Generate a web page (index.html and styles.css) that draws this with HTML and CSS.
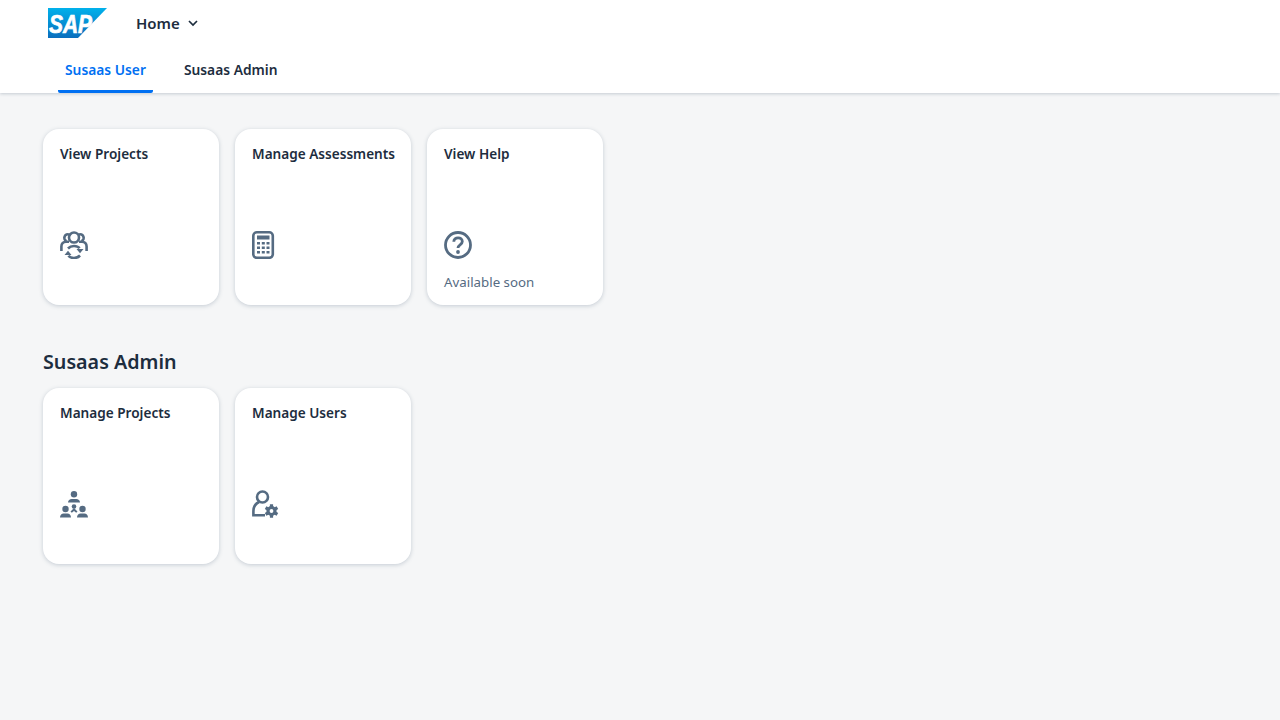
FILE: index.html
```html
<!DOCTYPE html>
<html lang="en">
<head>
    <meta charset="UTF-8">
    <title>Home</title>
    <link rel="stylesheet" href="styles.css">
</head>
<body>

<header class="shell">
    <div class="shell-top">
        <svg class="logo" width="59" height="30" viewBox="0 0 59 30">
            <defs>
                <linearGradient id="sapBlue" x1="0" y1="0" x2="0" y2="1">
                    <stop offset="0" stop-color="#00b1eb"/>
                    <stop offset="1" stop-color="#0a6ebd"/>
                </linearGradient>
            </defs>
            <polygon points="0,0 59,0 30,30 0,30" fill="url(#sapBlue)"/>
            <text class="logo-text" x="1" y="25" textLength="43" lengthAdjust="spacingAndGlyphs">SAP</text>
        </svg>
        <div class="home-menu">
            <span>Home</span>
            <svg width="12" height="12" viewBox="0 0 12 12"><path d="M2 4l4 4 4-4" fill="none" stroke="#1d2d3e" stroke-width="1.7"/></svg>
        </div>
    </div>
    <nav class="tabs">
        <a class="tab active">Susaas User</a>
        <a class="tab">Susaas Admin</a>
    </nav>
</header>

<main class="content">
    <section class="tile-row">
        <div class="tile">
            <div class="tile-title">View Projects</div>
            <div class="tile-body">
                <svg class="icon icon-heavy" width="28" height="28" viewBox="0 0 28 28">
                    <circle cx="14" cy="6.500" r="5"/>
                    <path d="M9.300 3.600a3.500 3.500 0 1 0-2.800 6.600M18.700 3.600a3.500 3.500 0 1 1 2.800 6.600"/>
                    <path d="M1.400 20v-4.500c0-3 2-4.800 4.600-4.800h3M26.600 20v-4.500c0-3-2-4.800-4.600-4.800h-3"/>
                    <path d="M8 17.500c1.600-1.700 3.600-2.500 6-2.500s4.400.8 5.600 2.300M20 24.500c-1.600 1.700-3.600 2.500-6 2.500s-4.400-.8-5.600-2.300"/>
                    <path class="solid" d="M16.500 18h7l-3.500 4.300zM4.500 24h7l-3.500-4.300z"/>
                </svg>
            </div>
        </div>
        <div class="tile">
            <div class="tile-title">Manage Assessments</div>
            <div class="tile-body">
                <svg class="icon" width="28" height="28" viewBox="0 0 28 28">
                    <rect x="1.300" y="1.300" width="19.500" height="25.500" rx="3.500" stroke-width="2.600"/>
                    <rect class="solid" x="5" y="4.500" width="12.500" height="4"/>
                    <path class="solid" d="M5 11h3v2.500h-3zM9.800 11h3v2.500h-3zM14.500 11h3v2.500h-3zM5 15.500h3v2.500h-3zM9.800 15.500h3v2.500h-3zM14.500 15.500h3v2.500h-3zM5 20h3v2.500h-3zM9.800 20h3v2.500h-3zM14.500 20h3v2.500h-3z"/>
                </svg>
            </div>
        </div>
        <div class="tile">
            <div class="tile-title">View Help</div>
            <div class="tile-body">
                <svg class="icon" width="28" height="28" viewBox="0 0 28 28">
                    <circle cx="14" cy="14" r="12.500" stroke-width="2.800"/>
                    <path d="M9.800 10.800c0-2.500 1.900-4 4.300-4s4.200 1.600 4.200 3.800c0 3.300-4.300 3.300-4.300 6.400" stroke-width="2.800"/>
                    <circle class="solid" cx="14" cy="21" r="1.900"/>
                </svg>
                <div class="tile-note">Available soon</div>
            </div>
        </div>
    </section>

    <h2 class="section-title">Susaas Admin</h2>

    <section class="tile-row">
        <div class="tile">
            <div class="tile-title">Manage Projects</div>
            <div class="tile-body">
                <svg class="icon" width="28" height="28" viewBox="0 0 28 28">
                    <g class="solid">
                        <circle cx="14" cy="4.300" r="3.200"/>
                        <path d="M8 12.500c0-2 1.800-3.500 3.700-3.500h4.600c1.900 0 3.700 1.500 3.700 3.500z"/>
                        <circle cx="5.500" cy="19" r="3.200"/>
                        <path d="M0 27.500c0-2.400 1.800-4 3.500-4h4c1.700 0 3.500 1.600 3.500 4z"/>
                        <circle cx="22.500" cy="19" r="3.200"/>
                        <path d="M17 27.500c0-2.400 1.800-4 3.500-4h4c1.700 0 3.500 1.600 3.500 4z"/>
                        <circle cx="14" cy="16.500" r="2.300"/>
                        <path d="M10.500 21.500l3.500-3.500 3.500 3.500-1.300 1.300-2.200-1.800-2.200 1.800z"/>
                    </g>
                </svg>
            </div>
        </div>
        <div class="tile">
            <div class="tile-title">Manage Users</div>
            <div class="tile-body">
                <svg class="icon" width="28" height="28" viewBox="0 0 28 28">
                    <circle cx="10.500" cy="7" r="5.500" stroke-width="2.600"/>
                    <path d="M7 12c-3.300 1.500-5.600 5-5.600 9.500v3.700h11.600" stroke-width="2.600"/>
                    <circle cx="19.500" cy="21" r="3.500" stroke-width="3.200"/>
                    <path d="M19.500 14.200v2.800M19.500 25v2.800M13.600 17.600l2.400 1.400M23 23l2.400 1.400M13.600 24.400l2.400-1.400M23 19l2.400-1.400" stroke-width="3.200"/>
                </svg>
            </div>
        </div>
    </section>
</main>

</body>
</html>
```

FILE: styles.css
```css
body {
    font-family: "Noto Sans", Arial, sans-serif;
    margin: 0;
    height: 720px;
    overflow: hidden;
    background-color: #f5f6f7;
    color: #1d2d3e;
}
.shell {
    height: 93px;
    background-color: #fff;
    box-shadow: 0 1px 3px rgba(85, 107, 130, 0.3);
}
.shell-top {
    display: flex;
    align-items: flex-start;
    height: 48px;
    padding: 8px 0 0 48px;
    box-sizing: border-box;
}
.logo-text {
    font-family: "Liberation Sans", Arial, sans-serif;
    font-size: 26px;
    font-weight: 700;
    font-style: italic;
    fill: #fff;
    stroke: #fff;
    stroke-width: 0.7;
}
.home-menu {
    display: flex;
    align-items: center;
    gap: 7px;
    margin-left: 29px;
    height: 30px;
    font-size: 15px;
    font-weight: 600;
}
.tabs {
    display: flex;
    gap: 24px;
    padding-left: 58px;
}
.tab {
    height: 45px;
    line-height: 44px;
    padding: 0 7px;
    font-size: 13.800px;
    font-weight: 600;
    box-sizing: border-box;
}
.tab.active {
    color: #0070f2;
    border-bottom: 3px solid #0070f2;
    border-radius: 0 0 2px 2px;
}
.content {
    padding: 36px 43px 0;
}
.tile-row {
    display: flex;
    gap: 16px;
}
.tile {
    display: flex;
    flex-direction: column;
    width: 176px;
    height: 176px;
    padding: 16px 17px;
    box-sizing: border-box;
    background-color: #fff;
    border-radius: 16px;
    box-shadow: 0 1px 4px rgba(85, 107, 130, 0.3);
}
.tile-title {
    font-size: 13.600px;
    font-weight: 600;
    line-height: 18px;
    white-space: nowrap;
}
.tile-body {
    margin-top: 68px;
}
.icon {
    display: block;
    fill: none;
    stroke: #556b82;
    stroke-width: 2.200;
}
.icon-heavy {
    stroke-width: 2.600;
}
.icon .solid {
    fill: #556b82;
    stroke: none;
}
.tile-note {
    margin-top: 14px;
    font-size: 13.300px;
    line-height: 18px;
    color: #556b82;
}
.section-title {
    margin: 44px 0 13px;
    font-size: 19.700px;
    font-weight: 600;
    line-height: 26px;
}
```
